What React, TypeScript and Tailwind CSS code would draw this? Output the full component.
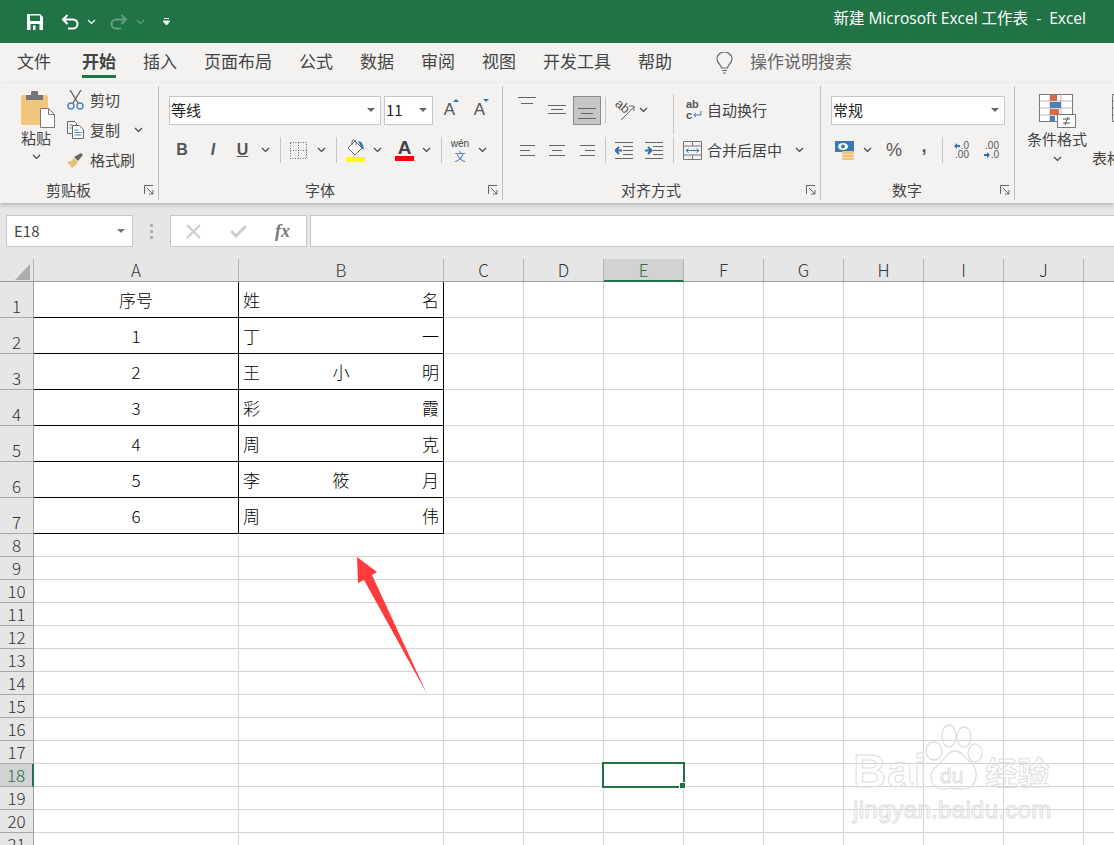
import React from "react";

const CJK = "font-['Noto_Sans_CJK_SC','Noto_Sans',sans-serif]";

function Chev({ className = "", color = "#444" }: { className?: string; color?: string }) {
  return (
    <svg width="9" height="6" viewBox="0 0 9 6" className={"shrink-0 " + className}>
      <path d="M1 1l3.5 3.5L8 1" fill="none" stroke={color} strokeWidth="1.2" />
    </svg>
  );
}
function Launcher() {
  return (
    <svg width="10" height="10" viewBox="0 0 10 10" className="ml-auto mr-[4px] shrink-0">
      <path d="M.5 9V.5H9M3 3l6 6M9 5v4H5" fill="none" stroke="#666" strokeWidth="1" />
    </svg>
  );
}
function Sep({ h = "h-[26px]", className = "" }: { h?: string; className?: string }) {
  return <div className={"w-px bg-[#c8c6c4] shrink-0 " + h + " " + className} />;
}
function Lines({ w, h, lines, className = "" }: { w: number; h: number; lines: number[][]; className?: string }) {
  return (
    <svg width={w} height={h} viewBox={`0 0 ${w} ${h}`} className={"shrink-0 " + className}>
      {lines.map((l, i) => (
        <line key={i} x1={l[0]} x2={l[1]} y1={l[2] + 0.5} y2={l[2] + 0.5} stroke="#666" strokeWidth="1" />
      ))}
    </svg>
  );
}
function Select({ text, className, textClass = "" }: { text: string; className: string; textClass?: string }) {
  return (
    <div className={"flex items-center h-[29px] bg-white border border-[#c6c6c6] shrink-0 " + className}>
      <span className={"text-[15px] text-[#222] pl-[1px] " + textClass}>{text}</span>
      <svg width="8" height="4" viewBox="0 0 8 4" className="ml-auto mr-[5px]">
        <path d="M0 0h8L4 4z" fill="#666" />
      </svg>
    </div>
  );
}
function Group({ w, children, label, pl }: { w: string; children: React.ReactNode; label: string; pl: string }) {
  return (
    <div className={"h-[114px] flex flex-col border-r border-[#c0bfbe] shrink-0 " + w}>
      <div className="h-[94px] shrink-0">{children}</div>
      <div className="h-[20px] flex items-center">
        <span className={"text-[15px] leading-[20px] text-[#444] " + pl}>{label}</span>
        <Launcher />
      </div>
    </div>
  );
}

const Tabs = [
  ["文件", "ml-[17px]"],
  ["开始", "ml-[31px]"],
  ["插入", "ml-[27px]"],
  ["页面布局", "ml-[27px]"],
  ["公式", "ml-[27px]"],
  ["数据", "ml-[27px]"],
  ["审阅", "ml-[27px]"],
  ["视图", "ml-[27px]"],
  ["开发工具", "ml-[27px]"],
  ["帮助", "ml-[27px]"],
];

function TitleBar() {
  return (
    <div className="h-[43px] bg-[#217346] flex items-center shrink-0 text-white">
      <svg width="16" height="16" viewBox="0 0 16 16" className="ml-[27px] shrink-0">
        <path d="M0 0h13l3 3v13H0z" fill="#fff" />
        <rect x="3" y="1.500" width="10" height="5.500" fill="#217346" />
        <rect x="3.500" y="10" width="9" height="6" fill="#217346" />
        <rect x="6" y="11.500" width="2.500" height="4.500" fill="#fff" />
      </svg>
      <svg width="18" height="16" viewBox="0 0 18 16" className="ml-[18px] shrink-0">
        <path d="M2 5.500h10a4.500 4.500 0 0 1 0 9H7M6.500 1L2 5.500 6.500 10" fill="none" stroke="#fff" strokeWidth="2" />
      </svg>
      <Chev color="#fff" className="ml-[8px]" />
      <svg width="18" height="16" viewBox="0 0 18 16" className="ml-[14px] shrink-0 opacity-30">
        <path d="M16 5.500H6a4.500 4.500 0 0 0 0 9h5M11.500 1L16 5.500 11.500 10" fill="none" stroke="#fff" strokeWidth="2" />
      </svg>
      <Chev color="#fff" className="ml-[8px] opacity-30" />
      <svg width="7" height="8" viewBox="0 0 7 8" className="ml-[18px] shrink-0">
        <path d="M1 .5h5M0 3h7L3.500 7z" fill="#fff" stroke="#fff" strokeWidth="1" />
      </svg>
      <span className="ml-auto mr-[28px] pb-[5px] text-[15.5px] whitespace-pre font-['Open_Sans','Noto_Sans_CJK_SC',sans-serif]">新建 Microsoft Excel 工作表  -  Excel</span>
    </div>
  );
}

function TabRow() {
  return (
    <div className="h-[40px] flex items-center bg-[#f3f2f1] text-[17px] text-[#444] shrink-0">
      {Tabs.map(([t, m]) => (
        <div key={t} className={"relative h-[40px] flex items-center pb-[5px] " + m + (t === "开始" ? " font-bold" : "")}>
          {t}
          {t === "开始" && <div className="absolute left-0 right-0 top-[32px] h-[3px] bg-[#217346]" />}
        </div>
      ))}
      <svg width="17" height="22" viewBox="0 0 17 22" className="ml-[44px] shrink-0">
        <path d="M5.500 16c0-3-4.500-4.500-4.500-9a7.500 7 0 0 1 15 0c0 4.500-4.500 6-4.500 9zM6 18.500h5M7 21h3" fill="none" stroke="#666" strokeWidth="1.200" />
      </svg>
      <span className="ml-[17px] pb-[5px] text-[#666]">操作说明搜索</span>
    </div>
  );
}

function Clipboard() {
  return (
    <div className="flex">
      <div className="ml-[6px] w-[60px] flex flex-col items-center">
        <svg width="34" height="38" viewBox="0 0 34 38" className="mt-[4px] ml-[4px] shrink-0">
          <rect x="0" y="5" width="27" height="30" rx="2" fill="#f0c67d" />
          <path d="M5 5h5V2a1 1 0 0 1 1-1h5a1 1 0 0 1 1 1v3h5v5H5z" fill="#767676" />
          <path d="M19.500 18.500h8l6 6v13h-14z" fill="#fff" stroke="#777" />
          <path d="M27.500 18.500v6h6" fill="none" stroke="#777" />
        </svg>
        <span className="text-[15px] leading-[20px] text-[#444]">粘贴</span>
        <Chev className="mt-[6px]" />
      </div>
      <div className="flex flex-col gap-[2px] text-[15px] text-[#444]">
        <div className="h-[28px] flex items-center">
          <svg width="17" height="20" viewBox="0 0 17 20" className="ml-[1px]">
            <path d="M3 0l8 13M14 0L6 13" stroke="#666" strokeWidth="1.400" />
            <circle cx="4" cy="16" r="3" fill="none" stroke="#4a86c0" strokeWidth="1.400" />
            <circle cx="13" cy="16" r="3" fill="none" stroke="#4a86c0" strokeWidth="1.400" />
          </svg>
          <span className="ml-[6px]">剪切</span>
        </div>
        <div className="h-[28px] flex items-center">
          <svg width="17" height="18" viewBox="0 0 17 18" className="ml-[1px]">
            <path d="M.5.5h7l2 2V4M.5.5v12h4" fill="none" stroke="#666" />
            <path d="M5.500 4.500h7l4 4v9h-11z" fill="#fff" stroke="#666" />
            <path d="M7.500 9h4M7.500 11.500h7M7.500 14h7" stroke="#4a86c0" />
            <path d="M2.500 4h3M2.500 7h2" stroke="#4a86c0" />
          </svg>
          <span className="ml-[6px]">复制</span>
          <Chev className="ml-[14px]" />
        </div>
        <div className="h-[28px] flex items-center">
          <svg width="17" height="15" viewBox="0 0 17 15" className="ml-[1px]">
            <path d="M0 9l5 6 4-3 2-3-4-4-3 3z" fill="#e8bf7e" />
            <path d="M7 4l4 4 5-6-2-2z" fill="#666" />
          </svg>
          <span className="ml-[6px]">格式刷</span>
        </div>
      </div>
    </div>
  );
}

function FontGroup() {
  return (
    <>
      <div className="h-[48px] flex items-center">
        <Select text="等线" className="ml-[10px] w-[212px]" />
        <Select text="11" className="ml-[3px] w-[49px]" />
        <div className="ml-[9px] w-[15px] flex justify-center relative text-[17px] leading-[20px] text-[#555] font-['Liberation_Sans']">
          A
          <svg width="6" height="3" viewBox="0 0 6 3" className="absolute top-[-1px] right-[-2px]"><path d="M0 3h6L3 0z" fill="#2f6fae" /></svg>
        </div>
        <div className="ml-[15px] w-[15px] flex justify-center relative text-[17px] leading-[20px] text-[#555] font-['Liberation_Sans']">
          A
          <svg width="6" height="3" viewBox="0 0 6 3" className="absolute top-[-1px] right-[-2px]"><path d="M0 0h6L3 3z" fill="#2f6fae" /></svg>
        </div>
      </div>
      <div className="h-[32px] flex items-center text-[#555]">
        <span className="ml-[17px] w-[12px] text-center text-[16px] font-bold font-['Liberation_Sans']">B</span>
        <span className="ml-[20px] w-[10px] text-center text-[16px] font-bold italic font-['Liberation_Sans']">I</span>
        <span className="ml-[18px] w-[13px] text-center text-[16px] font-bold underline font-['Liberation_Sans']">U</span>
        <Chev className="ml-[12px]" />
        <Sep className="ml-[10px]" />
        <svg width="17" height="17" viewBox="0 0 17 17" className="ml-[9px] shrink-0">
          <path d="M.5.500h16v16H.5zM8.500.500v16M.5 8.500h16" fill="none" stroke="#666" strokeDasharray="1 1.500" />
        </svg>
        <Chev className="ml-[10px]" />
        <Sep className="ml-[10px]" />
        <svg width="19" height="23" viewBox="0 0 19 23" className="ml-[9px] shrink-0">
          <path d="M9 2l7 7-7 7-7-7z" fill="#fff" stroke="#666" />
          <path d="M6 6V3a2 2 0 0 1 4 0v3" fill="none" stroke="#666" />
          <path d="M12 2c4 0 6 4 5.500 9l-2.500-3z" fill="#3a78b5" />
          <rect x="0" y="18" width="19" height="5" fill="#ffff00" />
        </svg>
        <Chev className="ml-[8px]" />
        <div className="ml-[13px] w-[19px] flex flex-col items-center shrink-0">
          <span className="text-[19px] leading-[17px] font-bold text-[#444] font-['Liberation_Sans']">A</span>
          <div className="w-[19px] h-[5px] bg-[#ff0000]" />
        </div>
        <Chev className="ml-[8px]" />
        <Sep className="ml-[10px]" />
        <div className="ml-[10px] w-[16px] flex flex-col items-center shrink-0">
          <span className="text-[10px] leading-[11px] text-[#444] font-['Liberation_Sans']">wén</span>
          <span className="text-[11px] leading-[14px] text-[#3a78b5]">文</span>
        </div>
        <Chev className="ml-[10px]" />
      </div>
    </>
  );
}

function AlignGroup() {
  return (
    <>
      <div className="h-[48px] flex items-center text-[15px] text-[#444]">
        <Lines w={18} h={8} lines={[[0, 18, 0], [3, 15, 6]]} className="ml-[15px] mt-[-18px]" />
        <Lines w={18} h={12} lines={[[0, 18, 1], [3, 15, 5], [0, 18, 9]]} className="ml-[12px]" />
        <div className="ml-[7px] w-[28px] h-[29px] bg-[#c8c6c4] border border-[#8a8a8a] flex items-end justify-center shrink-0 pb-[5px]">
          <Lines w={18} h={11} lines={[[0, 18, 0], [3, 15, 5], [0, 18, 10]]} />
        </div>
        <Sep className="ml-[4px]" />
        <svg width="21" height="22" viewBox="0 0 21 22" className="ml-[8px] shrink-0 overflow-visible">
          <text x="1" y="12" fontSize="13" fill="#555" transform="rotate(40 9 8)" fontFamily="Liberation Sans">ab</text>
          <path d="M7 21L20 8M15 7h5v5" fill="none" stroke="#666" />
        </svg>
        <Chev className="ml-[4px]" />
        <Sep h="h-[40px]" className="ml-[25px] mt-[8px]" />
        <div className="ml-[12px] w-[16px] flex flex-col shrink-0 font-['Liberation_Sans'] text-[11px] leading-[12px] text-[#555] font-bold mt-[-2px]">
          <span>ab</span>
          <span className="flex items-center mt-[-1px]">
            c
            <svg width="9" height="8" viewBox="0 0 9 8" className="ml-[1px]"><path d="M8 0v4H1M3 2L1 4l2 2" fill="none" stroke="#3a78b5" /></svg>
          </span>
        </div>
        <span className="ml-[5px]">自动换行</span>
      </div>
      <div className="h-[32px] flex items-center text-[15px] text-[#444]">
        <Lines w={15} h={11} lines={[[0, 15, 0], [0, 10, 5], [0, 15, 10]]} className="ml-[17px]" />
        <Lines w={16} h={11} lines={[[0, 16, 0], [3, 13, 5], [0, 16, 10]]} className="ml-[14px]" />
        <Lines w={15} h={11} lines={[[0, 15, 0], [5, 15, 5], [0, 15, 10]]} className="ml-[15px]" />
        <Sep className="ml-[10px]" />
        <svg width="18" height="17" viewBox="0 0 18 17" className="ml-[9px] shrink-0">
          <path d="M0 .5h18M8 4.500h10M8 8.500h10M8 12.500h10M0 16.500h18" stroke="#666" />
          <path d="M7 8.500H1M4 5L.5 8.500 4 12" fill="none" stroke="#2f6fae" strokeWidth="2" />
        </svg>
        <svg width="18" height="17" viewBox="0 0 18 17" className="ml-[12px] shrink-0">
          <path d="M0 .5h18M8 4.500h10M8 8.500h10M8 12.500h10M0 16.500h18" stroke="#666" />
          <path d="M0 8.500h6M3 5l3.500 3.500L3 12" fill="none" stroke="#2f6fae" strokeWidth="2" />
        </svg>
        <Sep className="ml-[10px]" />
        <svg width="19" height="19" viewBox="0 0 19 19" className="ml-[9px] shrink-0">
          <path d="M.5.5h18v18H.5zM.5 5h18M.5 14h18M9.500.5V5M9.500 14v4.500" fill="none" stroke="#777" />
          <path d="M3 9.500h13M5.500 7.500l-2.500 2 2.500 2M13.500 7.500l2.500 2-2.500 2" fill="none" stroke="#3a78b5" />
        </svg>
        <span className="ml-[5px]">合并后居中</span>
        <Chev className="ml-[13px]" />
      </div>
    </>
  );
}

function NumberGroup() {
  return (
    <>
      <div className="h-[48px] flex items-center">
        <Select text="常规" className="ml-[10px] w-[174px]" />
      </div>
      <div className="h-[32px] flex items-center text-[#555]">
        <svg width="20" height="20" viewBox="0 0 20 20" className="ml-[14px] shrink-0">
          <rect x="0" y="1" width="19" height="11" fill="#3a78b5" />
          <ellipse cx="8" cy="6.500" rx="5" ry="3.500" fill="#fff" />
          <circle cx="8" cy="6.500" r="2" fill="#3a78b5" />
          <rect x="7" y="11" width="12" height="3" rx="1" fill="#f0c67d" />
          <rect x="7" y="14.500" width="12" height="2.500" rx="1" fill="#f0c67d" />
          <rect x="7" y="17.500" width="12" height="2.500" rx="1" fill="#f0c67d" />
        </svg>
        <Chev className="ml-[8px]" />
        <span className="ml-[14px] w-[16px] text-[18px] text-center font-['Liberation_Sans']">%</span>
        <span className="ml-[19px] mb-[8px] w-[6px] text-[18px] leading-[18px] font-bold text-center font-['Liberation_Sans']">,</span>
        <Sep className="ml-[15px]" />
        <div className="ml-[10px] w-[16px] flex flex-col items-end text-[10px] leading-[9px] font-['Liberation_Sans'] shrink-0">
          <span className="flex items-center">
            <svg width="6" height="6" viewBox="0 0 6 6" className="mr-[1px]"><path d="M3 0L0 3l3 3zM3 2h3v2H3z" fill="#2f6fae" /></svg>
            .0
          </span>
          <span>.00</span>
        </div>
        <div className="ml-[14px] w-[16px] flex flex-col items-end text-[10px] leading-[9px] font-['Liberation_Sans'] shrink-0">
          <span>.00</span>
          <span className="flex items-center">
            <svg width="6" height="6" viewBox="0 0 6 6" className="mr-[1px]"><path d="M3 0l3 3-3 3zM0 2h3v2H0z" fill="#2f6fae" /></svg>
            .0
          </span>
        </div>
      </div>
    </>
  );
}

function StylesPart() {
  return (
    <div className="h-[114px] flex shrink-0 text-[15px] leading-[20px] text-[#444]">
      <div className="ml-[5px] w-[74px] flex flex-col items-center shrink-0">
        <svg width="37" height="34" viewBox="0 0 37 34" className="mt-[8px]">
          <rect x=".5" y=".5" width="33" height="27" fill="#fff" stroke="#777" />
          <path d="M11 .5v27M22 .5v27M.5 7h33M.5 14h33M.5 21h33" stroke="#bbb" />
          <rect x="11" y="1" width="7" height="6" fill="#d9694a" />
          <rect x="11" y="8" width="11" height="6" fill="#4a7fb8" />
          <rect x="11" y="15" width="9" height="6" fill="#d9694a" />
          <rect x="11" y="22" width="5" height="6" fill="#4a7fb8" />
          <rect x="18.500" y="20.500" width="18" height="13" fill="#fff" stroke="#777" />
          <path d="M24 25h7M24 29h7M26 31l3-8" stroke="#555" />
        </svg>
        <span className="mt-[1px]">条件格式</span>
        <Chev className="mt-[7px]" />
      </div>
      <div className="ml-[-2px] w-[60px] shrink-0 flex flex-col">
        <svg width="20" height="34" viewBox="0 0 20 34" className="mt-[8px] ml-[20px]">
          <path d="M.5.5h20M.5 7h20M.5 14h20M.5 21h20M.5 27.500h20M.5.5v27" stroke="#777" fill="none" />
        </svg>
        <span className="mt-[20px] whitespace-nowrap">表格</span>
      </div>
    </div>
  );
}

function Ribbon() {
  return (
    <div className="h-[120px] pt-[3px] flex bg-[#f3f2f1] shadow-[0_2px_4px_rgba(0,0,0,0.22)] relative z-10 shrink-0 overflow-hidden">
      <Group w="w-[159px]" label="剪贴板" pl="pl-[46px]"><Clipboard /></Group>
      <Group w="w-[344px]" label="字体" pl="pl-[146px]"><FontGroup /></Group>
      <Group w="w-[318px]" label="对齐方式" pl="pl-[118px]"><AlignGroup /></Group>
      <Group w="w-[194px]" label="数字" pl="pl-[71px]"><NumberGroup /></Group>
      <StylesPart />
    </div>
  );
}

function FormulaBar() {
  return (
    <div className="h-[56px] pt-[12px] flex items-start bg-[#e6e6e6] shrink-0">
      <div className="ml-[6px] w-[127px] h-[32px] bg-white border border-[#c6c6c6] flex items-center pl-[7px] text-[15px] text-[#444]">
        E18
        <svg width="8" height="4" viewBox="0 0 8 4" className="ml-auto mr-[7px]"><path d="M0 0h8L4 4z" fill="#777" /></svg>
      </div>
      <div className="ml-[17px] w-[3px] h-[32px] flex flex-col justify-center gap-[3px]">
        <div className="h-[3px] bg-[#b0b0b0]" />
        <div className="h-[3px] bg-[#b0b0b0]" />
        <div className="h-[3px] bg-[#b0b0b0]" />
      </div>
      <div className="ml-[17px] w-[137px] h-[32px] bg-white border border-[#c6c6c6] flex items-center">
        <svg width="15" height="15" viewBox="0 0 15 15" className="ml-[15px]"><path d="M1 1l13 13M14 1L1 14" stroke="#ccc" strokeWidth="2" /></svg>
        <svg width="17" height="14" viewBox="0 0 17 14" className="ml-[29px]"><path d="M1 7l5 5L16 2" fill="none" stroke="#ccc" strokeWidth="3" /></svg>
        <span className="ml-[28px] text-[18px] italic font-bold text-[#777] font-['Liberation_Serif']">fx</span>
      </div>
      <div className="ml-[3px] flex-1 h-[32px] bg-white border border-[#c6c6c6] border-r-0" />
    </div>
  );
}

const cols = [
  ["A", "w-[205px]"],
  ["B", "w-[205px]"],
  ["C", "w-[80px]"],
  ["D", "w-[80px]"],
  ["E", "w-[80px]"],
  ["F", "w-[80px]"],
  ["G", "w-[80px]"],
  ["H", "w-[80px]"],
  ["I", "w-[80px]"],
  ["J", "w-[80px]"],
  ["", "w-[80px]"],
];

const data: [string, string[]][] = [
  ["序号", ["姓", "名"]],
  ["1", ["丁", "一"]],
  ["2", ["王", "小", "明"]],
  ["3", ["彩", "霞"]],
  ["4", ["周", "克"]],
  ["5", ["李", "筱", "月"]],
  ["6", ["周", "伟"]],
];

function Sheet() {
  const rows = Array.from({ length: 21 }, (_, i) => i + 1);
  return (
    <div className={"flex-1 bg-white overflow-hidden text-[17px] font-light " + CJK}>
      <div className="h-[23px] flex bg-[#e6e6e6] border-b border-[#9a9a9a]">
        <div className="w-[34px] h-[22px] shrink-0 border-r border-[#b4b4b4] flex items-end justify-end pb-[1px] pr-[3px]">
          <div className="w-[15px] h-[16px] shrink-0 bg-[#adadad] [clip-path:polygon(100%_0,100%_100%,0_100%)]" />
        </div>
        {cols.map(([c, w]) => (
          <div
            key={c || "K"}
            className={
              "shrink-0 flex items-center justify-center text-[17px] leading-[22px] border-r border-[#b4b4b4] " +
              w +
              (c === "E" ? " bg-[#d2d2d2] text-[#217346] border-b-2 border-b-[#217346] h-[23px]" : " text-[#333]")
            }
          >
            {c}
          </div>
        ))}
      </div>
      {rows.map((r) => {
        const inTable = r <= 7;
        const sel = r === 18;
        const h = inTable ? "h-[36px]" : "h-[23px]";
        return (
          <div key={r} className={"flex " + h}>
            <div
              className={
                "w-[34px] shrink-0 flex items-end justify-center leading-[22px] border-b border-r border-b-[#a8a8a8] " +
                (sel
                  ? "bg-[#d2d2d2] text-[#217346] border-r-2 border-r-[#217346]"
                  : "bg-[#e6e6e6] text-[#333] border-r-[#a0a0a0]")
              }
            >
              {r}
            </div>
            {inTable ? (
              <>
                <div className="w-[205px] shrink-0 border-r border-b border-black flex items-center justify-center text-black">
                  {data[r - 1][0]}
                </div>
                <div className="w-[205px] shrink-0 border-r border-b border-black flex items-center justify-between px-[4px] text-black">
                  {data[r - 1][1].map((t) => (
                    <span key={t}>{t}</span>
                  ))}
                </div>
              </>
            ) : (
              <>
                <div className="w-[205px] shrink-0 border-r border-b border-[#d4d4d4]" />
                <div className="w-[205px] shrink-0 border-r border-b border-[#d4d4d4]" />
              </>
            )}
            {cols.slice(2).map(([c, w]) => (
              <div key={c || "K"} className={"relative shrink-0 border-r border-b border-[#d4d4d4] " + w}>
                {c === "E" && sel && (
                  <div className="absolute left-[-2px] top-[-2px] w-[83px] h-[26px] border-2 border-[#217346] z-10">
                    <div className="absolute right-[-3px] bottom-[-3px] w-[7px] h-[7px] bg-[#217346] border border-white" />
                  </div>
                )}
              </div>
            ))}
          </div>
        );
      })}
    </div>
  );
}

function Arrow() {
  return (
    <svg width="80" height="145" viewBox="0 0 80 145" className="absolute left-[355px] top-[555px] z-20">
      <path d="M2 2L22 17l-5 3L72 139 9 25l-6 3z" fill="#ff3b3b" />
    </svg>
  );
}

function Watermark() {
  const stroke = "text-transparent [-webkit-text-stroke:1px_#dedede] font-['Liberation_Sans'] font-bold";
  return (
    <div className="absolute left-[853px] top-[722px] w-[210px] h-[104px] z-20">
      <div className="flex items-center h-[76px] pt-[22px]">
        <span className={"text-[46px] leading-[46px] tracking-[1px] " + stroke}>Bai</span>
        <svg width="60" height="72" viewBox="0 0 60 72" className="ml-[-3px] mt-[-22px] shrink-0">
          <g fill="none" stroke="#dedede" strokeWidth="1.300">
            <ellipse cx="9" cy="27" rx="8" ry="9" />
            <ellipse cx="24" cy="12" rx="7" ry="11" />
            <ellipse cx="39" cy="13" rx="7" ry="10" />
            <ellipse cx="50" cy="29" rx="7" ry="9" />
            <path d="M30 27c7 0 10 7 16 12 8 7 7 24-6 26-6 1-14-2-20 0C6 66 1 50 12 42c7-5 10-15 18-15z" />
          </g>
          <text x="15" y="59" fontSize="21" fill="none" stroke="#dedede" fontFamily="Liberation Sans">du</text>
        </svg>
        <span className="ml-[1px] text-[32px] leading-[36px] text-transparent [-webkit-text-stroke:1px_#dedede] font-bold whitespace-nowrap">经验</span>
      </div>
      <div className="mt-[-1px] text-[24px] leading-[26px] tracking-[0.3px] text-transparent [-webkit-text-stroke:1px_#dedede] font-['Liberation_Sans']">
        jingyan.baidu.com
      </div>
    </div>
  );
}

export default function App() {
  return (
    <div className={"relative w-[1114px] h-[845px] overflow-hidden flex flex-col bg-white " + CJK}>
      <TitleBar />
      <TabRow />
      <Ribbon />
      <FormulaBar />
      <Sheet />
      <Arrow />
      <Watermark />
    </div>
  );
}
